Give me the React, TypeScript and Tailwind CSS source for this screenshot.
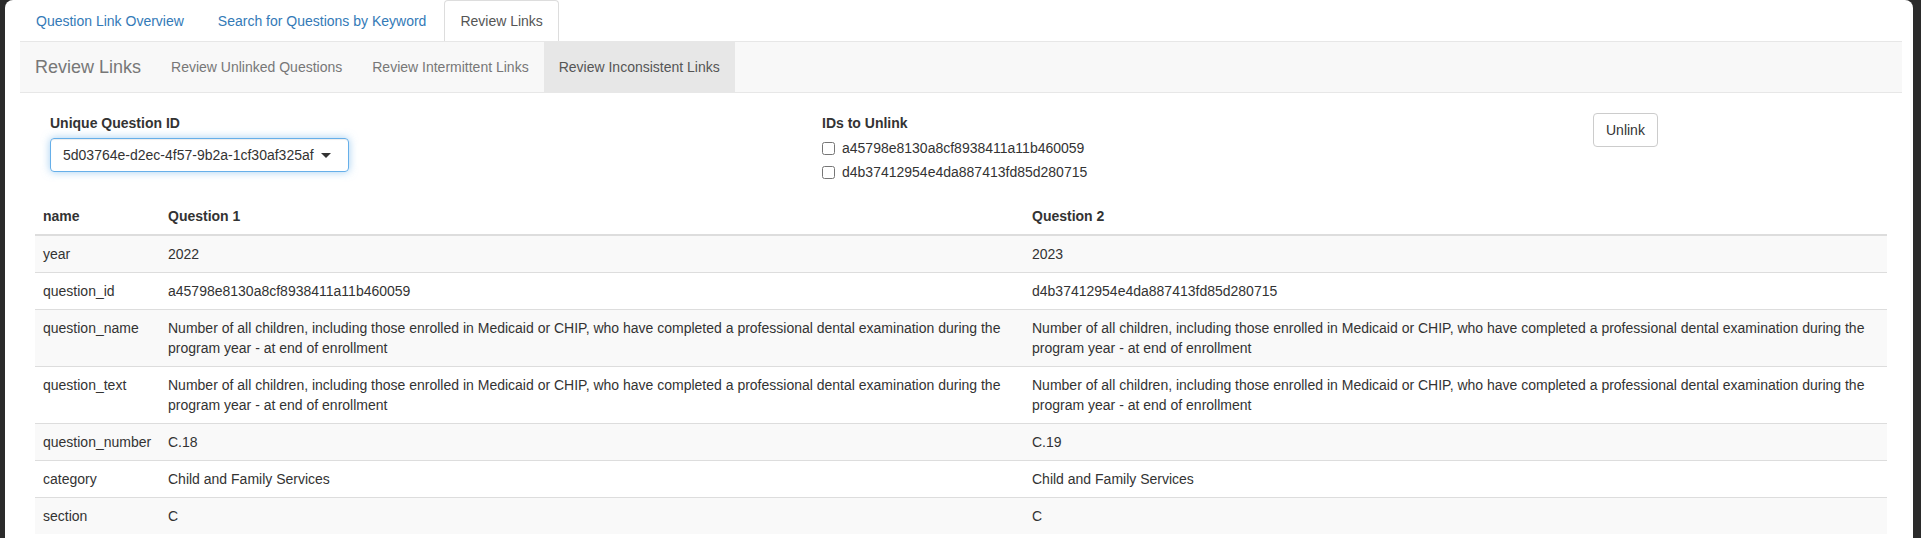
const TABS = ["Question Link Overview", "Search for Questions by Keyword", "Review Links"];
const NAV = ["Review Unlinked Questions", "Review Intermittent Links", "Review Inconsistent Links"];

const LONG_TEXT =
  "Number of all children, including those enrolled in Medicaid or CHIP, who have completed a professional dental examination during the program year - at end of enrollment";

const ROWS: [string, string, string][] = [
  ["year", "2022", "2023"],
  ["question_id", "a45798e8130a8cf8938411a11b460059", "d4b37412954e4da887413fd85d280715"],
  ["question_name", LONG_TEXT, LONG_TEXT],
  ["question_text", LONG_TEXT, LONG_TEXT],
  ["question_number", "C.18", "C.19"],
  ["category", "Child and Family Services", "Child and Family Services"],
  ["section", "C", "C"],
];

const UNLINK_IDS = ["a45798e8130a8cf8938411a11b460059", "d4b37412954e4da887413fd85d280715"];

function TabBar({ active }: { active: string }) {
  return (
    <ul className="flex h-[41px]">
      {TABS.map((t) => (
        <li key={t} className="mr-[2px]">
          {t === active ? (
            <a className="block h-[41px] rounded-t-[4px] border-x border-t border-[#ddd] bg-white px-[15px] pt-[10px] leading-[20px] text-[#555]">
              {t}
            </a>
          ) : (
            <a className="block h-[41px] border-x border-t border-transparent px-[15px] pt-[10px] leading-[20px] text-[#337ab7]">
              {t}
            </a>
          )}
        </li>
      ))}
    </ul>
  );
}

function NavBar({ active }: { active: string }) {
  return (
    <div className="flex h-[52px] border-y border-[#e7e7e7] bg-[#f8f8f8]">
      <span className="px-[15px] py-[15px] text-[18px] leading-[20px] text-[#777]">Review Links</span>
      {NAV.map((n) => (
        <a
          key={n}
          className={`px-[15px] py-[15px] leading-[20px] ${
            n === active ? "bg-[#e7e7e7] text-[#555]" : "text-[#777]"
          }`}
        >
          {n}
        </a>
      ))}
    </div>
  );
}

function FilterRow() {
  return (
    <div className="flex h-[85px] pl-[15px]">
      <div className="w-[772px]">
        <label className="block font-bold leading-[20px]">Unique Question ID</label>
        <div className="mt-[5px] flex h-[34px] w-[299px] items-center justify-between rounded-[4px] border border-[#66afe9] pl-[12px] pr-[17px] shadow-[inset_0_1px_1px_rgba(0,0,0,0.075),0_0_8px_rgba(102,175,233,0.6)]">
          <span>5d03764e-d2ec-4f57-9b2a-1cf30af325af</span>
          <span className="h-0 w-0 border-x-[5px] border-t-[5px] border-x-transparent border-t-[#333]" />
        </div>
      </div>
      <div className="w-[771px]">
        <label className="block font-bold leading-[20px]">IDs to Unlink</label>
        <div className="mt-[5px] flex flex-col gap-[4px]">
          {UNLINK_IDS.map((id) => (
            <label key={id} className="flex h-[20px] items-center gap-[7px]">
              <input type="checkbox" className="m-0 h-[13px] w-[13px]" />
              <span>{id}</span>
            </label>
          ))}
        </div>
      </div>
      <div>
        <button className="h-[34px] rounded-[4px] border border-[#ccc] bg-white px-[12px] leading-[20px] text-[#333]">
          Unlink
        </button>
      </div>
    </div>
  );
}

function CompareTable() {
  return (
    <table className="w-full table-fixed border-collapse">
      <colgroup>
        <col className="w-[125px]" />
        <col className="w-[864px]" />
        <col />
      </colgroup>
      <thead>
        <tr>
          <th className="border-b-2 border-[#ddd] p-[8px] text-left font-bold leading-[20px]">name</th>
          <th className="border-b-2 border-[#ddd] p-[8px] text-left font-bold leading-[20px]">Question 1</th>
          <th className="border-b-2 border-[#ddd] p-[8px] text-left font-bold leading-[20px]">Question 2</th>
        </tr>
      </thead>
      <tbody>
        {ROWS.map(([name, q1, q2], i) => (
          <tr key={name} className={i % 2 === 0 ? "bg-[#f9f9f9]" : "bg-white"}>
            <td className={`p-[8px] align-top leading-[20px] ${i > 0 ? "border-t border-[#ddd]" : ""}`}>{name}</td>
            <td className={`p-[8px] align-top leading-[20px] ${i > 0 ? "border-t border-[#ddd]" : ""}`}>{q1}</td>
            <td className={`p-[8px] align-top leading-[20px] ${i > 0 ? "border-t border-[#ddd]" : ""}`}>{q2}</td>
          </tr>
        ))}
      </tbody>
    </table>
  );
}

export default function App() {
  return (
    <div className="h-[538px] overflow-hidden bg-[#2b2b2b] pl-[5px] pr-[8px] font-['Liberation_Sans',Arial,sans-serif] text-[14px] text-[#333]">
      <div className="h-full rounded-t-[8px] bg-white pl-[15px] pr-[11px]">
        <TabBar active="Review Links" />
        <NavBar active="Review Inconsistent Links" />
        <div className="mt-[20px] px-[15px]">
          <FilterRow />
          <CompareTable />
        </div>
      </div>
    </div>
  );
}
